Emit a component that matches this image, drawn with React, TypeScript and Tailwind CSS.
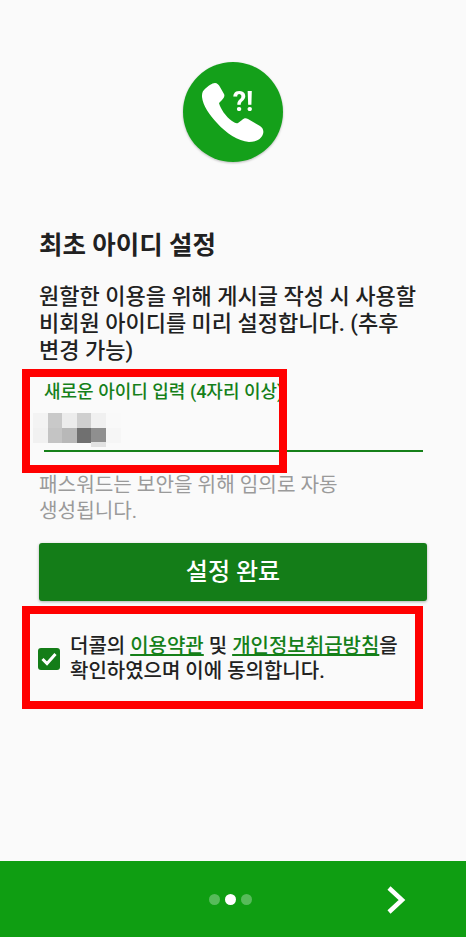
import React from 'react';

const font = { fontFamily: '"Roboto", "Noto Sans CJK KR", sans-serif' };

// mosaic over the typed id, [column, row, colour]
const blur: [number, number, string][] = [
  [0, 0, '#f3f3f3'], [1, 0, '#c9c9c9'], [2, 0, '#ececec'], [3, 0, '#cfcfcf'], [4, 0, '#f0f0f0'], [5, 0, '#f9f9f9'],
  [0, 1, '#f1f1f1'], [1, 1, '#c4c4c4'], [2, 1, '#b8b8b8'], [3, 1, '#707070'], [4, 1, '#8f8f8f'], [5, 1, '#f6f6f6'],
  [4, 2, '#e2e2e2'],
];

const Logo = () => (
  <svg width="102" height="102" viewBox="0 0 102 102" className="drop-shadow-[0_1px_1px_rgba(0,0,0,0.25)]">
    <circle cx="51" cy="51" r="50" fill="#14a01a" />
    <path
      d="M22 29C26 25 30 22 33 22C35 22 37 24 38 26L42 33C43 35 42 37 40 39L37 42C38 47 44 56 50 60C52 61 54 63 56 62L60 59C62 57 64 57 66 58L78 65C81 67 82 70 81 73C79 79 73 81 67 81C56 80 44 72 35 62C27 53 21 45 20 36C20 33 20 31 22 29Z"
      fill="#fff"
    />
    <text x="61" y="50" fontSize="27" fontWeight="700" fill="#fff" textAnchor="middle" style={{ fontFamily: '"Roboto", sans-serif' }}>?!</text>
  </svg>
);

export default function App() {
  return (
    <div className="relative w-[466px] h-[937px] bg-[#fafafa] flex flex-col overflow-hidden" style={font}>
      <div className="flex-1 px-[39px] flex flex-col">
        <div className="flex justify-center pt-[61px]">
          <Logo />
        </div>
        <h1 className="mt-[67px] text-[25.5px] leading-[30px] font-bold text-[#212121] whitespace-nowrap">최초 아이디 설정</h1>
        <p className="mt-[23px] text-[22px] leading-[27px] text-[#212121] font-medium w-[388px] break-keep">
          원할한 이용을 위해 게시글 작성 시 사용할 비회원 아이디를 미리 설정합니다. (추후 변경 가능)
        </p>
        <div className="mt-[17px] pl-[5px]">
          <div className="text-[18px] leading-[22px] font-medium text-[#158019] whitespace-nowrap">새로운 아이디 입력 (4자리 이상)</div>
          <div className="h-[47px]" />
          <div className="h-[2px] bg-[#158019] w-[379px]" />
        </div>
        <p className="mt-[20px] text-[20.2px] leading-[26px] text-[#9a9a9a] w-[320px] break-keep">
          패스워드는 보안을 위해 임의로 자동 생성됩니다.
        </p>
        <button className="mt-[19px] h-[58px] w-[388px] bg-[#147d18] rounded-[3px] shadow-[0_1px_3px_rgba(0,0,0,0.3)] text-white text-[24px] font-medium">
          설정 완료
        </button>
        <div className="mt-[33px] flex items-center gap-[10px] w-[390px] -ml-[1px]">
          <div className="w-[22px] h-[22px] rounded-[3px] bg-[#147d18] flex items-center justify-center shrink-0">
            <svg width="16" height="14" viewBox="0 0 16 14">
              <path d="M1.5 7l4.5 4.5L14.5 2" stroke="#fff" strokeWidth="3" fill="none" />
            </svg>
          </div>
          <p className="text-[20px] leading-[25px] font-medium text-[#212121] whitespace-nowrap">
            더콜의 <span className="text-[#158019] underline">이용약관</span> 및{' '}
            <span className="text-[#158019] underline">개인정보취급방침</span>을
            <br />
            확인하였으며 이에 동의합니다.
          </p>
        </div>
      </div>

      <div className="relative h-[76px] bg-[#0f9e12] flex items-center justify-center shrink-0">
        <div className="flex items-center gap-[5px] -ml-[6px]">
          <span className="w-[11px] h-[11px] rounded-full bg-[#57bb5a]" />
          <span className="w-[11px] h-[11px] rounded-full bg-white" />
          <span className="w-[11px] h-[11px] rounded-full bg-[#57bb5a]" />
        </div>
        <svg className="absolute left-[386px] top-[24px]" width="20" height="30" viewBox="0 0 20 30">
          <path d="M3 3l13 12L3 27" stroke="#fff" strokeWidth="4.5" fill="none" />
        </svg>
      </div>

      {/* red annotation boxes and mosaic sit on top of the screenshot */}
      <div className="absolute left-[33px] top-[413px] w-[90px] h-[34px] overflow-hidden">
        {blur.map(([c, r, color]) => (
          <span
            key={`${c}-${r}`}
            className="absolute w-[15px] h-[15px]"
            style={{ left: c * 14.5, top: r * 14.5, background: color }}
          />
        ))}
      </div>
      <div className="absolute left-[22px] top-[369px] w-[265px] h-[104px] border-[8px] border-[#ff0000]" />
      <div className="absolute left-[22px] top-[606px] w-[401px] h-[103px] border-[8px] border-[#ff0000]" />
    </div>
  );
}
